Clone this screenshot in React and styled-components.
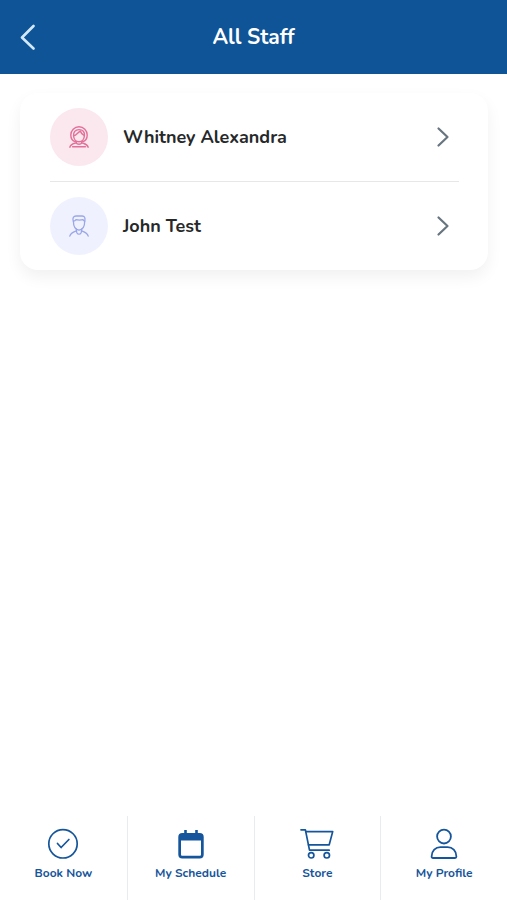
import React from 'react'
import styled, { createGlobalStyle } from 'styled-components'

const staff = [
  { name: 'Whitney Alexandra', gender: 'female' },
  { name: 'John Test', gender: 'male' },
]

function BackIcon() {
  return (
    <svg width="16" height="26" viewBox="0 0 16 26" fill="none" stroke="currentColor" strokeWidth="2.6" strokeLinecap="round" strokeLinejoin="round" aria-hidden="true">
      <path d="M13.5 2 2 13.500l11.500 11" />
    </svg>
  )
}

function ArrowIcon() {
  return (
    <svg width="14" height="22" viewBox="0 0 14 22" fill="none" stroke="currentColor" strokeWidth="2.2" strokeLinecap="round" strokeLinejoin="round" aria-hidden="true">
      <path d="m2.500 2.500 9 8.500-9 8.500" />
    </svg>
  )
}

function FemaleIcon() {
  return (
    <svg width="20" height="22" viewBox="0 0 20 22" fill="none" stroke="currentColor" strokeWidth="1.4" strokeLinecap="round" strokeLinejoin="round" aria-hidden="true">
      <path d="M6.500 15.800C3.500 15 1.800 12.200 1.800 9A8.200 8.200 0 0 1 18.200 9c0 3.200-1.700 6-4.700 6.800" />
      <path d="M4.600 9.800c3-.4 4.200-3.600 6.800-4.800.4 2 1.800 3.400 4 4.600-.2 3.400-2.400 6.200-5.400 6.200s-5.300-2.600-5.400-6Z" />
      <path d="M4.600 9.800C4.200 6.400 6.200 3.600 10 3.600s5.900 2.600 5.400 6" />
      <path d="M7.400 15.600v1.200C4.400 17.800 1.800 17.800.8 21.200M12.600 15.600v1.200c3 1 5.600 1 6.600 4.400M3.600 20.800h12.800M7.200 17.200c1 1.400 4.600 1.400 5.600 0" />
    </svg>
  )
}

function MaleIcon() {
  return (
    <svg width="20" height="22" viewBox="0 0 20 22" fill="none" stroke="currentColor" strokeWidth="1.3" strokeLinecap="round" strokeLinejoin="round" aria-hidden="true">
      <path d="M4.300 6.200C3.200 2.800 4.600 1 7 1h6.200c2.400 0 3.200 1.800 2.600 5.200" />
      <path d="M4.400 6.200c0 4.600 2 8.400 5.600 9 3.600-.6 5.700-4.400 5.700-9-.8-.2-1.200-.8-1.700-1.600-2.400.6-4.800.6-7 0-.6 1-1.400 1.500-2.600 1.600Z" />
      <path d="M7.400 14v2C4 17.200 1.700 17.800.8 21.200M12.600 14v2c3.400 1.200 5.700 1.800 6.600 5.200" />
      <path d="m7.400 16 .6 2c.8 1.600 3.200 1.600 4 0l.6-2" />
    </svg>
  )
}

function CheckIcon() {
  return (
    <svg width="34" height="32" viewBox="0 0 34 32" fill="none" stroke="currentColor" strokeWidth="1.7" strokeLinecap="round" strokeLinejoin="round" aria-hidden="true">
      <circle cx="17" cy="15.800" r="14.200" />
      <path d="m11.500 15.500 3.600 4 7.800-8" />
    </svg>
  )
}

function CalendarIcon() {
  return (
    <svg width="34" height="32" viewBox="0 0 34 32" fill="currentColor" aria-hidden="true">
      <path fillRule="evenodd" d="M10.200 2h2.600v3h8.400V2h2.600v3h1.900a4 4 0 0 1 4 4v17.500a4 4 0 0 1-4 4H8.300a4 4 0 0 1-4-4V9a4 4 0 0 1 4-4h1.900V2ZM7 12.500v14c0 .8.500 1.300 1.300 1.300h17.400c.8 0 1.300-.5 1.300-1.300v-14H7Z" />
    </svg>
  )
}

function CartIcon() {
  return (
    <svg width="34" height="32" viewBox="0 0 34 32" fill="none" stroke="currentColor" strokeWidth="1.7" strokeLinecap="round" strokeLinejoin="round" aria-hidden="true">
      <path d="M1 1.800h4.400L9.500 22.200h19.700" />
      <path d="M5.800 3.600h26.900l-3.500 13.200H8.500" />
      <circle cx="11.200" cy="27.300" r="2.700" />
      <circle cx="26.800" cy="27.300" r="2.700" />
    </svg>
  )
}

function ProfileIcon() {
  return (
    <svg width="34" height="32" viewBox="0 0 34 32" fill="none" stroke="currentColor" strokeWidth="1.8" strokeLinejoin="round" aria-hidden="true">
      <circle cx="17" cy="8.600" r="6.900" />
      <path d="M4.600 28.600C4.600 22.800 8.600 19.200 13.400 19.200h7.200c4.800 0 8.800 3.600 8.800 9.400 0 .9-.5 1.400-1.400 1.400H6c-.9 0-1.400-.5-1.400-1.400Z" />
    </svg>
  )
}

const tabs = [
  { label: 'Book Now', Icon: CheckIcon },
  { label: 'My Schedule', Icon: CalendarIcon },
  { label: 'Store', Icon: CartIcon },
  { label: 'My Profile', Icon: ProfileIcon },
]

function StaffRow({ name, gender }) {
  return (
    <Row>
      <StaffLink href="#">
        <Avatar $gender={gender}>
          {gender === 'female' ? <FemaleIcon /> : <MaleIcon />}
        </Avatar>
        <StaffName>{name}</StaffName>
        <ArrowIcon />
      </StaffLink>
    </Row>
  )
}

function App() {
  return (
    <Page>
      <GlobalStyle />
      <Header>
        <BackButton type="button" aria-label="Back">
          <BackIcon />
        </BackButton>
        <Title>All Staff</Title>
      </Header>
      <Main>
        <StaffList>
          {staff.map(person => (
            <StaffRow key={person.name} {...person} />
          ))}
        </StaffList>
      </Main>
      <TabBar>
        {tabs.map(({ label, Icon }) => (
          <Tab href="#" key={label}>
            <Icon />
            {label}
          </Tab>
        ))}
      </TabBar>
    </Page>
  )
}

const GlobalStyle = createGlobalStyle`
    * {
        box-sizing: border-box;
    }
    body {
        margin: 0;
        background-color: #fff;
        font-family: Nunito, "Open Sans", sans-serif;
    }
`
const Page = styled.div`
    min-height: 100vh;
    display: flex;
    flex-direction: column;
`
const Header = styled.header`
    display: grid;
    grid-template-columns: 56px 1fr 56px;
    align-items: center;
    height: 74px;
    background-color: #0e5497;
    color: white;
`
const BackButton = styled.button`
    display: flex;
    justify-content: center;
    padding: 12px 0;
    border: 0;
    background: none;
    color: #d3e8f8;
    cursor: pointer;
`
const Title = styled.h1`
    margin: 0;
    font-size: 21px;
    line-height: 28px;
    font-weight: 700;
    text-align: center;
`
const Main = styled.main`
    flex: 1;
    padding: 19px 19px 32px 20px;
`
const StaffList = styled.ul`
    margin: 0;
    padding: 0 29px 0 30px;
    list-style: none;
    border-radius: 18px;
    background-color: white;
    box-shadow: 0 7px 16px rgba(0, 0, 0, 0.06);
`
const Row = styled.li`
    & + & {
        border-top: 1px solid #e6e7e9;
    }
`
const StaffLink = styled.a`
    display: flex;
    align-items: center;
    gap: 15px;
    height: 88px;
    padding-right: 9px;
    color: #66757f;
    text-decoration: none;
`
const Avatar = styled.span`
    display: flex;
    justify-content: center;
    align-items: center;
    width: 58px;
    height: 58px;
    border-radius: 50%;
    background-color: ${props => (props.$gender === 'female' ? '#fbe7ee' : '#eff2fe')};
    color: ${props => (props.$gender === 'female' ? '#e27099' : '#9aa6e8')};
`
const StaffName = styled.span`
    flex: 1;
    color: #262829;
    font-size: 18px;
    line-height: 24px;
    font-weight: 700;
`
const TabBar = styled.nav`
    display: grid;
    grid-template-columns: repeat(4, 1fr);
    height: 84px;
`
const Tab = styled.a`
    display: flex;
    flex-direction: column;
    align-items: center;
    gap: 5px;
    padding-top: 12px;
    color: #15559b;
    font-size: 12px;
    line-height: 16px;
    font-weight: 700;
    text-decoration: none;
    & + & {
        border-left: 1px solid #e9ecee;
    }
`
export default App
